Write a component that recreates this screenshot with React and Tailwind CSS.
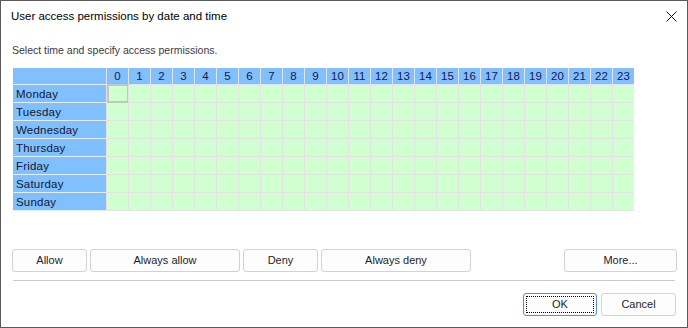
import React from 'react';

const DAYS = ['Monday', 'Tuesday', 'Wednesday', 'Thursday', 'Friday', 'Saturday', 'Sunday'];
const HOURS = Array.from({ length: 24 }, (_, i) => i);

function Btn({ children, className = '', focused = false }) {
    return (
        <button
            className={`h-[23px] bg-[#fdfdfd] border rounded-[3px] text-[11px] text-[#1e1e1e] flex items-center justify-center ${focused ? 'border-[#5b8dc9] p-[2px]' : 'border-[#d2d2d2]'} ${className}`}
        >
            {focused ? (
                <span className="w-full h-full border border-dotted border-black flex items-center justify-center">{children}</span>
            ) : children}
        </button>
    );
}

export default function App() {
    return (
        <div className="w-[688px] h-[328px] bg-white border border-[#5a5a5a] flex flex-col" style={{ fontFamily: '"Liberation Sans", Arial, sans-serif' }}>
            {/* title bar */}
            <div className="h-[30px] flex items-center justify-between pl-[10px] pr-[10px] shrink-0">
                <span className="text-[11.5px] text-black pt-[1px]">User access permissions by date and time</span>
                <svg width="11" height="11" viewBox="0 0 11 11">
                    <path d="M0.5 0.5 L10.5 10.5 M10.5 0.5 L0.5 10.5" stroke="#111" strokeWidth="1" fill="none" />
                </svg>
            </div>

            <div className="pt-[12px] pl-[11px] h-[25px] text-[10.5px] leading-[14px] text-[#3a3a3a]">
                Select time and specify access permissions.
            </div>

            {/* schedule grid */}
            <div className="mt-[12px] ml-[12px] grid grid-cols-[93px_repeat(24,22px)] grid-rows-[17px_repeat(7,18px)] w-max text-[11.5px]">
                <div className="bg-[#80c0ff] border-b border-[#e4eef8]" />
                {HOURS.map(h => (
                    <div key={h} className="bg-[#80c0ff] border-l border-b border-[#e4e4e4] flex items-center justify-center pt-[2px] text-[#1c1450]">
                        {h}
                    </div>
                ))}
                {DAYS.map((d, r) => (
                    <React.Fragment key={d}>
                        <div className="bg-[#80c0ff] border-b border-[#e4eef8] pl-[3px] pt-[2px] flex items-center text-[#151530] tracking-[0.2px]">
                            {d}
                        </div>
                        {HOURS.map(h => (
                            <div key={h} className="bg-[#d0ffd0] border-l border-b border-[#e2e2e2] relative">
                                {r === 0 && h === 0 && (
                                    <div className="absolute left-0 top-[-1px] w-[22px] h-[19px] border-2 border-[#c4c4c4]" />
                                )}
                            </div>
                        ))}
                    </React.Fragment>
                ))}
            </div>

            {/* action buttons */}
            <div className="mt-[38px] pl-[11px] pr-[10px] flex items-center">
                <Btn className="w-[75px]">Allow</Btn>
                <Btn className="w-[150px] ml-[3px]">Always allow</Btn>
                <Btn className="w-[75px] ml-[3px]">Deny</Btn>
                <Btn className="w-[150px] ml-[3px]">Always deny</Btn>
                <div className="flex-1" />
                <Btn className="w-[113px]">More...</Btn>
            </div>

            <div className="mt-[8px] mx-[12px] h-px bg-[#c8c8c8]" />

            <div className="mt-[12px] pr-[11px] flex justify-end gap-[4px]">
                <Btn className="w-[74px]" focused>OK</Btn>
                <Btn className="w-[75px]">Cancel</Btn>
            </div>
        </div>
    );
}
